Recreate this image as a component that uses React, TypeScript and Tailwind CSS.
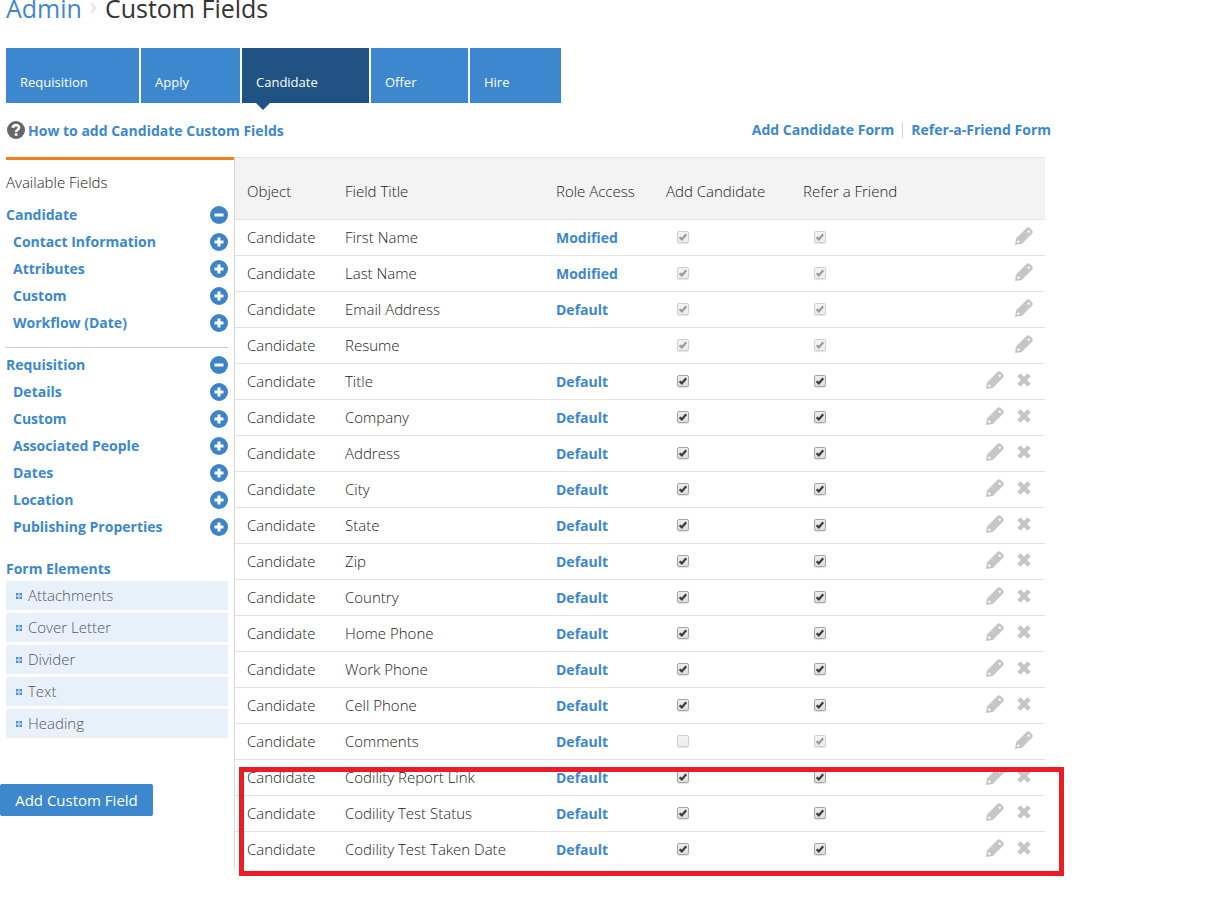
import { useState } from "react";

const TABS = [
  { label: "Requisition", width: "w-[133px]" },
  { label: "Apply", width: "w-[99px]" },
  { label: "Candidate", width: "w-[127px]" },
  { label: "Offer", width: "w-[97px]" },
  { label: "Hire", width: "w-[91px]" },
];

const FIELD_GROUPS = [
  { title: "Candidate", items: ["Contact Information", "Attributes", "Custom", "Workflow (Date)"] },
  {
    title: "Requisition",
    items: ["Details", "Custom", "Associated People", "Dates", "Location", "Publishing Properties"],
  },
];

const FORM_ELEMENTS = ["Attachments", "Cover Letter", "Divider", "Text", "Heading"];

type Field = { title: string; access?: string; locked?: boolean; add?: boolean };

const FIELDS: Field[] = [
  { title: "First Name", access: "Modified", locked: true },
  { title: "Last Name", access: "Modified", locked: true },
  { title: "Email Address", access: "Default", locked: true },
  { title: "Resume", locked: true },
  { title: "Title", access: "Default" },
  { title: "Company", access: "Default" },
  { title: "Address", access: "Default" },
  { title: "City", access: "Default" },
  { title: "State", access: "Default" },
  { title: "Zip", access: "Default" },
  { title: "Country", access: "Default" },
  { title: "Home Phone", access: "Default" },
  { title: "Work Phone", access: "Default" },
  { title: "Cell Phone", access: "Default" },
  { title: "Comments", access: "Default", locked: true, add: false },
  { title: "Codility Report Link", access: "Default" },
  { title: "Codility Test Status", access: "Default" },
  { title: "Codility Test Taken Date", access: "Default" },
];

function PencilIcon() {
  return (
    <svg width="18" height="18" viewBox="0 0 18 18" fill="#c6c6c6">
      <path
        fillRule="evenodd"
        d="M0 18 L1 11.4 L11.2 1.2 Q13 -0.6 14.8 1 L17 3.2 Q18.7 5 17 6.7 L6.8 16.9 Z M13.7 3.4 a1.2 1.2 0 1 0 0.01 0 Z M3.4 13.4 a1.2 1.2 0 1 0 0.01 0 Z"
      />
    </svg>
  );
}

function CrossIcon() {
  return (
    <svg width="14" height="14" viewBox="0 0 14 14" stroke="#c6c6c6" strokeWidth="4.4">
      <path d="M1.8 1.8 L12.2 12.2 M12.2 1.8 L1.8 12.2" />
    </svg>
  );
}

function ToggleIcon({ open }: { open: boolean }) {
  return (
    <svg width="18" height="18" viewBox="0 0 18 18">
      <circle cx="9" cy="9" r="9" fill="#3c83c8" />
      <path d={open ? "M4.5 9 H13.5" : "M4.5 9 H13.5 M9 4.5 V13.5"} stroke="#fff" strokeWidth="3" />
    </svg>
  );
}

function HelpIcon() {
  return (
    <svg width="18" height="18" viewBox="0 0 18 18" fill="none">
      <circle cx="9" cy="9" r="9" fill="#666" />
      <path d="M5.9 6.9 C6 3.2 12.1 3.2 12 6.8 C12 8.8 9.1 8.7 9.1 11" stroke="#fff" strokeWidth="2.6" />
      <rect x="7.7" y="12.2" width="2.8" height="2.6" fill="#fff" />
    </svg>
  );
}

function DragIcon() {
  return (
    <svg width="6" height="6" viewBox="0 0 6 6" fill="#4a90d2">
      <path d="M0 0h2.5v2.5H0z M3.5 0H6v2.5H3.5z M0 3.5h2.5V6H0z M3.5 3.5H6V6H3.5z" />
    </svg>
  );
}

function FieldCheckbox({ label, initial, disabled }: { label: string; initial: boolean; disabled?: boolean }) {
  const [checked, setChecked] = useState(initial);

  return (
    <span className="relative ml-[11px] block h-3 w-3">
      <input
        type="checkbox"
        aria-label={label}
        checked={checked}
        disabled={disabled}
        onChange={(e) => setChecked(e.target.checked)}
        className="block h-3 w-3 appearance-none rounded-xs border border-[#a5a5a5] bg-linear-to-b from-[#eeeeee] to-[#dddddd] shadow-[0_1px_1px_#e2e2e2] disabled:border-[#d0d0d0] disabled:from-[#f3f3f3] disabled:to-[#ececec]"
      />
      {checked && (
        <svg className="pointer-events-none absolute inset-0" width="12" height="12" viewBox="0 0 12 12" fill="none">
          <path d="M2.6 6.2 L4.8 8.4 L9.2 3.2" stroke={disabled ? "#999" : "#3a3a3a"} strokeWidth="2.2" />
        </svg>
      )}
    </span>
  );
}

function Sidebar() {
  return (
    <aside className="w-[228px] shrink-0 border-t-3 border-[#f57c20] pt-3 pr-1.5">
      <h2 className="mb-2 leading-[21px] font-light text-[#222]">Available Fields</h2>
      {FIELD_GROUPS.map((group, i) => (
        <section key={group.title} className={i > 0 ? "mt-[11px] border-t border-[#c8c8c8] pt-[3px]" : ""}>
          {[group.title, ...group.items].map((item, j) => (
            <button
              key={item}
              className={`flex h-[27px] w-full cursor-pointer items-center justify-between text-left text-[14px] font-bold text-[#3d87cf] ${j > 0 ? "pl-[7px]" : ""}`}
            >
              {item}
              <ToggleIcon open={j === 0} />
            </button>
          ))}
        </section>
      ))}

      <h2 className="mt-[19px] mb-0.5 text-[14px] leading-5 font-bold text-[#3d87cf]">Form Elements</h2>
      <ul className="flex flex-col gap-[3px]">
        {FORM_ELEMENTS.map((el) => (
          <li key={el} className="flex h-[29px] cursor-move items-center gap-1.5 bg-[#e8f1f9] pl-2.5 font-light text-[#555]">
            <DragIcon />
            {el}
          </li>
        ))}
      </ul>

      <button className="mt-[46px] -ml-1.5 h-8 w-[153px] cursor-pointer rounded-xs bg-[#3d87cf] text-white">
        Add Custom Field
      </button>
    </aside>
  );
}

function FieldTable() {
  return (
    <div className="relative min-w-0 flex-1 self-start border-l border-[#d6d6d6]">
      <table className="w-full table-fixed text-left font-light text-[#222]">
        <colgroup>
          <col className="w-[110px]" />
          <col className="w-[211px]" />
          <col className="w-[110px]" />
          <col className="w-[137px]" />
          <col className="w-[137px]" />
          <col />
        </colgroup>
        <thead>
          <tr className="h-[62px] border-y border-[#e3e3e3] bg-[#f3f3f3]">
            <th className="pt-1.5 pl-3 font-light">Object</th>
            <th className="pt-1.5 font-light">Field Title</th>
            <th className="pt-1.5 font-light">Role Access</th>
            <th className="pt-1.5 font-light">Add Candidate</th>
            <th className="pt-1.5 font-light">Refer a Friend</th>
            <th aria-label="Actions" />
          </tr>
        </thead>
        <tbody>
          {FIELDS.map((f) => (
            <tr key={f.title} className="h-9 border-b border-[#e3e3e3] last:border-b-0">
              <td className="pl-3">Candidate</td>
              <td>{f.title}</td>
              <td>
                {f.access && (
                  <a href="#" className="text-[14px] font-bold text-[#3d87cf]">
                    {f.access}
                  </a>
                )}
              </td>
              <td className="pb-0.5">
                <FieldCheckbox label={`Add Candidate: ${f.title}`} initial={f.add ?? true} disabled={f.locked} />
              </td>
              <td className="pb-0.5">
                <FieldCheckbox label={`Refer a Friend: ${f.title}`} initial disabled={f.locked} />
              </td>
              <td>
                <div className="flex items-center justify-end gap-[13px] pr-3 pb-1">
                  <button aria-label={`Edit ${f.title}`} className="cursor-pointer">
                    <PencilIcon />
                  </button>
                  {!f.locked && (
                    <button aria-label={`Remove ${f.title}`} className="mr-0.5 cursor-pointer">
                      <CrossIcon />
                    </button>
                  )}
                </div>
              </td>
            </tr>
          ))}
        </tbody>
      </table>

      {/* highlight around the Codility fields */}
      <div className="pointer-events-none absolute -right-[19px] -bottom-2 left-1 h-[109px] border-5 border-[#ed1c24]" />
    </div>
  );
}

export default function App() {
  const [tab, setTab] = useState("Candidate");

  return (
    <div className="min-h-screen overflow-hidden bg-white pr-[180px] pl-1.5 font-['Open_Sans',sans-serif] text-[15px] leading-[21px] text-[#333]">
      <h1 className="-mt-2 flex h-8 items-center gap-2 text-[25px] leading-[34px]">
        <a href="#" className="text-[#3d87cf]">
          Admin
        </a>
        <svg width="7" height="12" viewBox="0 0 7 12" fill="none" stroke="#e6e6e6" strokeWidth="2.5">
          <path d="M1 1 L5 6 L1 11" />
        </svg>
        Custom Fields
      </h1>

      <nav className="mt-6 flex gap-0.5">
        {TABS.map((t) => (
          <button
            key={t.label}
            onClick={() => setTab(t.label)}
            className={`relative h-[55px] cursor-pointer pt-3.5 pl-3.5 text-left text-[13px] text-white ${t.width} ${tab === t.label ? "bg-[#205383]" : "bg-[#3d87cf]"}`}
          >
            {t.label}
            {tab === t.label && (
              <span className="absolute top-full left-3.5 border-x-7 border-t-7 border-x-transparent border-t-[#205383]" />
            )}
          </button>
        ))}
      </nav>

      <div className="mt-4 -mr-1.5 flex h-[22px] items-center justify-between text-[14px] font-bold text-[#3d87cf]">
        <a href="#" className="flex items-center gap-[3px] pl-px">
          <HelpIcon />
          How to add Candidate Custom Fields
        </a>
        <div className="flex items-center">
          <a href="#" className="border-r border-[#c5dfb8] pr-2 leading-4">
            Add Candidate Form
          </a>
          <a href="#" className="pl-2 leading-4">
            Refer-a-Friend Form
          </a>
        </div>
      </div>

      <div className="mt-4 flex items-stretch">
        <Sidebar />
        <FieldTable />
      </div>
    </div>
  );
}
